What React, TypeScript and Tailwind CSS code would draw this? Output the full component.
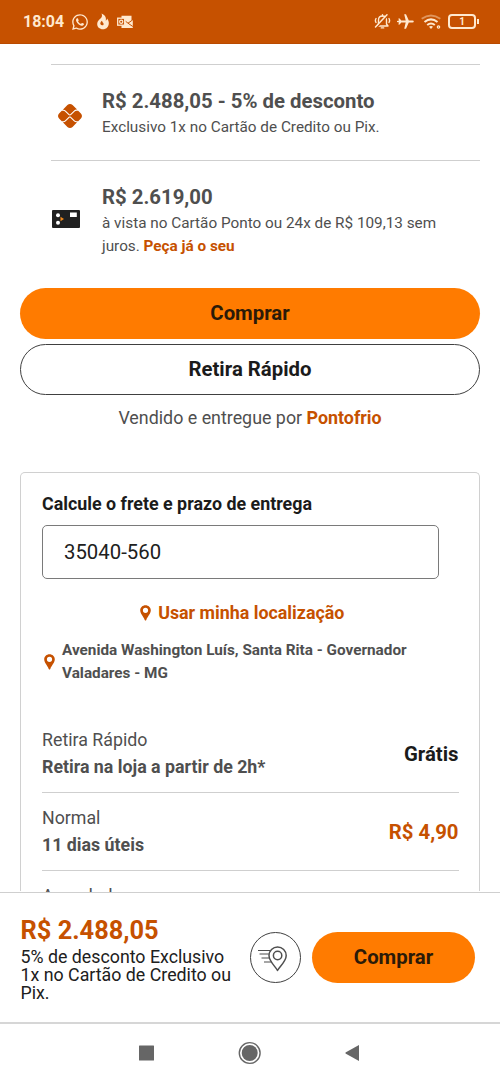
import { FaWhatsapp } from 'react-icons/fa'
import { FaPix } from 'react-icons/fa6'

const SHIPPING_OPTIONS = [
  { id: 1, name: "Retira Rápido", deadline: "Retira na loja a partir de 2h*", price: "Grátis", free: true },
  { id: 2, name: "Normal", deadline: "11 dias úteis", price: "R$ 4,90", free: false }
]

function Pin() {
  return (
    <svg width="11" height="16" viewBox="0 0 11 16" className="shrink-0">
      <path
        fill="#c65100"
        fillRule="evenodd"
        d="M5.5 0.3C2.6 0.3 0.2 2.5 0.2 5.3c0 3.6 3.300 6 4.500 9.700q.8 1.200 1.600 0c1.200-3.700 4.500-6.100 4.500-9.700C10.800 2.500 8.400 0.300 5.500 0.300Zm0 2.400a2.600 2.600 0 1 1 0 5.200a2.600 2.600 0 0 1 0-5.200Z"
      />
    </svg>
  )
}

function StatusBar() {
  return (
    <header className="flex h-11 shrink-0 items-center border-b border-[#b94a00] bg-[#c65100] pl-[23px] pr-[21px] text-[#ffe9cf]">
      <span className="w-[48px] text-[16px] font-bold leading-5">18:04</span>
      <FaWhatsapp size={18} />
      {/* Flame */}
      <svg width="12" height="17" viewBox="0 0 12 17" className="ml-[8px]">
        <path
          fill="currentColor"
          d="M4.500 0.500C8.500 2 9.500 5.200 8.700 7.800C9.700 7.300 10 6.500 10 5.500C11.500 7.300 12 9 11.800 10.800C11.400 14.200 9.200 16.300 6 16.300C2.500 16.300 0.100 14 0.200 10.800C0.300 8.300 2 7 3.500 5.600C5 4.200 5.500 2.700 4.500 0.500ZM5 7.700C3.600 8.700 3 10 3.500 11.300C4.100 12.700 6.200 12.700 6.600 11.400C7 10 5.300 9.500 5 7.700Z"
        />
      </svg>
      {/* Outlook */}
      <svg width="16" height="14" viewBox="0 0 16 14" className="ml-[8px]">
        <path fill="currentColor" d="M4.500 0.800H14.500V5H15.800V13H4.500Z" />
        <path d="M8.500 6.200L11 8.200L15.800 4.800M11 8.200L15.800 11.500" fill="none" stroke="#c65100" strokeWidth="1" />
        <rect x="0.700" y="3.200" width="7" height="7" fill="#c65100" stroke="currentColor" strokeWidth="1.300" />
        <circle cx="4.200" cy="6.700" r="1.600" fill="none" stroke="currentColor" strokeWidth="1.200" />
      </svg>

      <div className="ml-auto flex items-center">
        {/* Muted bell */}
        <svg width="17" height="17" viewBox="0 0 17 17" fill="none" stroke="currentColor" strokeWidth="1.400" strokeLinecap="round">
          <path d="M3.500 13H14L12.500 11V7C12.500 4.500 11 3 8.500 3C6 3 4.500 4.500 4.500 7V11L3.500 13Z" strokeLinejoin="round" />
          <path d="M7.300 14.900H9.700M8.500 1.700V3M2 5.500Q.8 7.500 2 9.500M15 5.500Q16.200 7.500 15 9.500" />
          <path d="M2.700 14.500L14 2.400" stroke="#c65100" strokeWidth="1.500" />
          <path d="M1.500 14L13 1.700" strokeWidth="1.500" />
        </svg>
        {/* Airplane */}
        <svg width="17" height="15" viewBox="0 0 17 15" className="ml-[6px]">
          <path
            fill="currentColor"
            d="M15.500 6.400H11.800L9 .3H7.200L8.700 6.400H4.200L2.700 4.500H1.300L2 6.600L0 7V8L2 8.400L1.300 10.500H2.700L4.200 8.600H8.700L7.200 14.700H9L11.800 8.600H15.500Q16.800 8.500 16.800 7.500T15.500 6.400Z"
          />
        </svg>
        {/* Wi-Fi */}
        <svg width="20" height="15" viewBox="0 0 20 15" fill="none" stroke="currentColor" strokeWidth="2" className="ml-[7px]">
          <path d="M0.700 4.800Q10 -2 19.300 4.800" opacity="0.450" />
          <path d="M3.500 8Q10 2.700 16.500 8" />
          <path d="M6.200 11Q10 8 13.800 11" />
          <path d="M8 12.700Q10 11.400 12 12.700L10 14.900Z" fill="currentColor" stroke="none" />
          <circle cx="17.500" cy="13" r="1.200" strokeWidth="1.200" />
        </svg>
        <div className="ml-[7px] flex h-[15px] w-[28px] items-center justify-center rounded-[4px] border-2 border-[#ffe9cf] text-[10px] font-bold leading-none">
          1
        </div>
        <div className="ml-px h-[5px] w-[2px] bg-[#ffe9cf]" />
      </div>
    </header>
  )
}

function PaymentOptions() {
  return (
    <section className="ml-[51px] mr-[20px] mt-5 shrink-0 text-[#4f4f4f]">
      <div className="flex h-24 border-t border-[#cfcfcf]">
        <div className="w-[51px] pl-[7px] pt-[39px]">
          <FaPix size={24} className="text-[#c65100]" />
        </div>
        <div className="pt-[25px]">
          <h2 className="text-[20.350px] font-bold leading-[23px]">R$ 2.488,05 - 5% de desconto</h2>
          <p className="mt-[3px] text-[15.300px] leading-[23px]">Exclusivo 1x no Cartão de Credito ou Pix.</p>
        </div>
      </div>
      <div className="flex h-[128px] border-t border-[#cfcfcf]">
        <div className="w-[51px] pl-[1px] pt-[49px]">
          <svg width="28" height="18" viewBox="0 0 28 18">
            <rect width="28" height="18" rx="1" fill="#202020" />
            <circle cx="6" cy="5.200" r="2" fill="#fff" />
            <circle cx="6" cy="12.800" r="2" fill="#fff" />
            <path d="M8.500 6.800L12 9L8.500 11.200Z" fill="#f28a1d" />
            <rect x="18" y="2.500" width="6.800" height="4.500" fill="#fff" />
          </svg>
        </div>
        <div className="pt-[25px]">
          <h2 className="text-[20.350px] font-bold leading-[23px]">R$ 2.619,00</h2>
          <p className="mt-[3px] text-[15.300px] leading-[22.900px]">
            à vista no Cartão Ponto ou 24x de R$ 109,13 sem<br />
            juros. <a className="font-bold text-[#c65100]">Peça já o seu</a>
          </p>
        </div>
      </div>
    </section>
  )
}

function ShippingCard() {
  return (
    <section className="mx-[20px] mt-[42px] h-[419px] rounded-t-[5px] border border-b-0 border-[#d0d0d0] pl-[21px] pr-[20.500px] pt-[19px]">
      <h3 className="text-[17.850px] font-bold leading-[23px] text-[#1b1b1b]">Calcule o frete e prazo de entrega</h3>
      <div className="mt-[10px] flex h-[54px] w-[397px] items-center rounded-[5px] border border-[#7a7a7a] pl-[21px] text-[20.350px] text-[#202020]">
        35040-560
      </div>
      <a className="mt-[22px] flex h-6 items-center justify-center gap-[7px] pr-[16px] text-[17.850px] font-bold text-[#c65100]">
        <Pin />
        Usar minha localização
      </a>
      <div className="mt-[14px] flex items-center gap-[7px] pl-[2px] text-[15.300px] font-bold leading-[23px] text-[#4f4f4f]">
        <Pin />
        <p>
          Avenida Washington Luís, Santa Rita - Governador<br />
          Valadares - MG
        </p>
      </div>

      {/* Delivery options */}
      <div className="mt-[30px]">
        {SHIPPING_OPTIONS.map((option) => (
          <div key={option.id} className="flex h-[78px] items-center justify-between border-b border-[#cfcfcf] text-[#4f4f4f]">
            <div className="text-[17.800px] leading-[26.500px]">
              <p>{option.name}</p>
              <p className="font-bold">{option.deadline}</p>
            </div>
            <span className={option.free ? "pt-[2px] text-[20.350px] font-bold text-[#1b1b1b]" : "pt-[2px] text-[20.350px] font-bold text-[#c65100]"}>
              {option.price}
            </span>
          </div>
        ))}
        <p className="pt-[12px] text-[17.800px] leading-[26.500px] text-[#4f4f4f]">Agendada</p>
      </div>
    </section>
  )
}

function BuyBar() {
  return (
    <section className="flex h-[132px] shrink-0 border-b-2 border-t border-[#d6d6d6] border-t-[#cfcfcf] bg-white pl-[20.500px]">
      <div className="w-[229.500px] pt-[22px]">
        <p className="text-[25.400px] font-bold leading-[30px] text-[#c65100]">R$ 2.488,05</p>
        <p className="mt-[3px] text-[17.800px] leading-[17.800px] text-[#202020]">
          5% de desconto Exclusivo<br />
          1x no Cartão de Credito ou<br />
          Pix.
        </p>
      </div>
      <button className="mt-[39px] flex size-[51px] items-center justify-center rounded-full border border-[#404040]">
        <svg width="51" height="51" viewBox="0 0 51 51" fill="none" stroke="#4f4f4f" strokeWidth="1.500" className="shrink-0">
          <path d="M27.500 38.500C25.500 34.500 19 29.500 19 23.500A8.600 8.600 0 0 1 36.200 23.500C36.200 29.500 29.700 34.500 27.500 38.500Z" strokeLinejoin="round" />
          <circle cx="27.600" cy="23.500" r="4.200" />
          <path d="M8 18.500H20M9.500 22H19M11.500 26H19.500M14 30H21" strokeWidth="1.200" />
        </svg>
      </button>
      <button className="ml-[11px] mt-[39px] h-[51px] w-[163px] rounded-full bg-[#ff7b00] text-[20.350px] font-bold text-[#2b1a08]">
        Comprar
      </button>
    </section>
  )
}

export default function App() {
  return (
    <div className="flex h-[1083px] w-[500px] flex-col overflow-hidden bg-white font-[Roboto,sans-serif]">
      <StatusBar />
      <main className="flex h-[848px] shrink-0 flex-col overflow-hidden">
        <PaymentOptions />
        <div className="mx-[20px] flex shrink-0 flex-col gap-[5px]">
          <button className="h-[51px] rounded-full bg-[#ff7b00] text-[20.350px] font-bold text-[#2b1a08]">Comprar</button>
          <button className="h-[51px] rounded-full border border-[#404040] text-[20.350px] font-bold text-[#1b1b1b]">Retira Rápido</button>
        </div>
        <p className="mt-[11px] shrink-0 text-center text-[17.850px] leading-[24px] text-[#4f4f4f]">
          Vendido e entregue por <a className="font-bold text-[#c65100]">Pontofrio</a>
        </p>
        <ShippingCard />
      </main>
      <BuyBar />
      {/* System navigation */}
      <nav className="flex h-[58px] shrink-0 items-center pl-[138px]">
        <svg width="222" height="24" viewBox="0 0 222 24" fill="#666">
          <rect x="1" y="4.500" width="15" height="15" rx="0.500" />
          <circle cx="111.700" cy="12" r="8" />
          <circle cx="111.700" cy="12" r="10.400" fill="none" stroke="#666" strokeWidth="1.400" />
          <path d="M221 4V20L207.500 12.500V11.500Z" strokeLinejoin="round" />
        </svg>
      </nav>
    </div>
  )
}
